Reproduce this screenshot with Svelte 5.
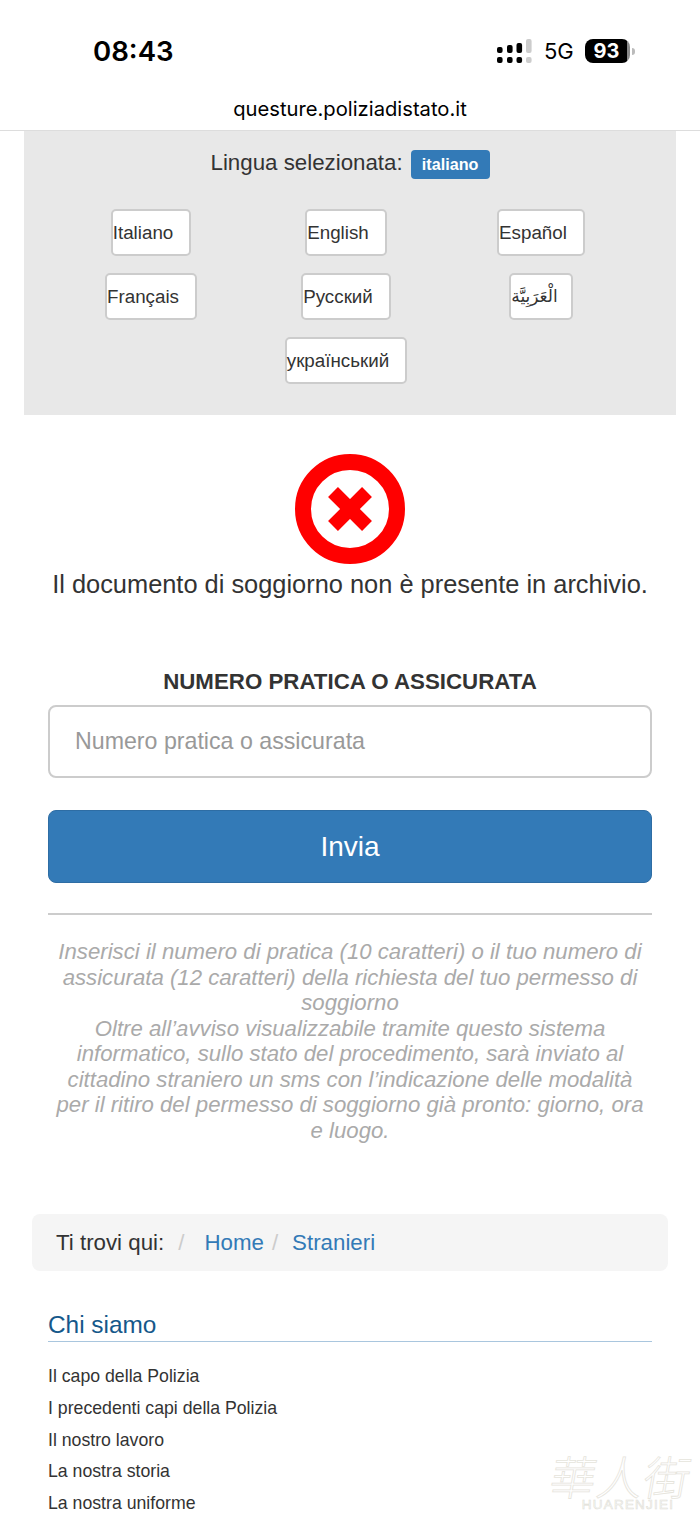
<script>
  const languages = [
    { label: 'Italiano' },
    { label: 'English' },
    { label: 'Español' },
    { label: 'Français' },
    { label: 'Русский' },
    { label: 'الْعَرَبِيَّة', rtl: true },
    { label: 'український', center: true }
  ]
  const links = [
    'Il capo della Polizia',
    'I precedenti capi della Polizia',
    'Il nostro lavoro',
    'La nostra storia',
    'La nostra uniforme'
  ]
  // top pill of each signal column, the last one is greyed out
  const bars = [
    { x: 0, y: 8, h: 6 },
    { x: 10, y: 6, h: 8 },
    { x: 19.5, y: 4, h: 10 },
    { x: 29, y: 0, h: 14 }
  ]
</script>

<div class="page">
  <header class="status">
    <span class="time">08:43</span>
    <div class="status-right">
      <svg class="signal" width="35" height="24" viewBox="0 0 35 24">
        {#each bars as bar, i}
          <rect x={bar.x} y={bar.y} width="5.6" height={bar.h} rx="2" fill={i === 3 ? '#ccc' : '#000'} />
          <rect x={bar.x} y="18" width="5.6" height="6" rx="2" fill={i === 3 ? '#ccc' : '#000'} />
        {/each}
      </svg>
      <span class="net">5G</span>
      <div class="battery"><span class="level">93</span></div>
      <span class="nub"></span>
    </div>
  </header>
  <div class="url">questure.poliziadistato.it</div>

  <section class="lang-panel">
    <div class="selected">Lingua selezionata: <span class="badge">italiano</span></div>
    <div class="lang-grid">
      {#each languages as lang}
        <div class="lang-cell" class:center={lang.center}>
          <button class="lang" class:rtl={lang.rtl}>{lang.label}</button>
        </div>
      {/each}
    </div>
  </section>

  <main class="form">
    <svg class="error" width="110" height="110" viewBox="0 0 110 110">
      <circle cx="55" cy="55" r="47" fill="#fff" stroke="#f00" stroke-width="16" />
      <path d="M38 38 L72 72 M72 38 L38 72" stroke="#f00" stroke-width="14" fill="none" />
    </svg>
    <p class="message">Il documento di soggiorno non è presente in archivio.</p>
    <label class="field-label" for="numero">NUMERO PRATICA O ASSICURATA</label>
    <input id="numero" class="field" placeholder="Numero pratica o assicurata" />
    <button class="submit">Invia</button>
    <hr />
    <p class="help">
      Inserisci il numero di pratica (10 caratteri) o il tuo numero di assicurata (12 caratteri) della richiesta del tuo permesso di soggiorno<br />
      Oltre all’avviso visualizzabile tramite questo sistema informatico, sullo stato del procedimento, sarà inviato al cittadino straniero un sms con l’indicazione delle modalità per il ritiro del permesso di soggiorno già pronto: giorno, ora e luogo.
    </p>
  </main>

  <nav class="crumbs">
    <span class="here">Ti trovi qui:</span>
    <span class="sep first">/</span>
    <a href="#home">Home</a>
    <span class="sep">/</span>
    <a href="#stranieri">Stranieri</a>
  </nav>

  <section class="footer-block">
    <h4>Chi siamo</h4>
    <ul>
      {#each links as link}
        <li>{link}</li>
      {/each}
    </ul>
  </section>

  <div class="watermark">
    <span class="mark-cn">華人街</span>
    <span class="mark-en">HUARENJIEI</span>
  </div>
</div>

<style>
  :global(body) {
    margin: 0;
    background: #fff;
    overflow: hidden;
  }

  .page {
    position: relative;
    width: 700px;
    height: 1520px;
    overflow: hidden;
    font-family: "Liberation Sans", Arial, sans-serif;
    color: #333;
  }

  .status {
    display: flex;
    justify-content: space-between;
    align-items: center;
    height: 24px;
    padding: 39px 65px 0 93px;
    color: #000;
  }

  .time {
    font-family: Inter, sans-serif;
    font-size: 27.6px;
    font-weight: 600;
    line-height: 26px;
    width: 80px;
    white-space: nowrap;
  }

  .status-right {
    display: flex;
    align-items: center;
  }

  .signal {
    display: block;
  }

  .net {
    font-family: Inter, sans-serif;
    font-size: 22px;
    font-weight: 400;
    margin-left: 12px;
    width: 31px;
  }

  .battery {
    margin-left: 10px;
    width: 45px;
    height: 24px;
    border-radius: 8px;
    background: linear-gradient(to right, #000 42px, #8a8a8a 42px);
    display: flex;
    justify-content: center;
    align-items: center;
  }

  .level {
    color: #fff;
    font-family: Inter, sans-serif;
    font-size: 20px;
    font-weight: 700;
    margin-right: 2px;
  }

  .nub {
    width: 3px;
    height: 7px;
    margin-left: 2px;
    border-radius: 0 3px 3px 0;
    background: #bbb;
  }

  .url {
    margin-top: 33px;
    height: 34px;
    line-height: 26px;
    text-align: center;
    font-family: Inter, sans-serif;
    font-size: 20.2px;
    color: #000;
    border-bottom: 1px solid #ddd;
  }

  .lang-panel {
    margin: 0 24px;
    height: 284px;
    background: #e8e8e8;
  }

  .selected {
    padding-top: 19px;
    height: 29px;
    line-height: 26px;
    text-align: center;
    font-size: 22.3px;
  }

  .badge {
    display: inline-block;
    margin-left: 2px;
    padding: 0 11px;
    height: 29px;
    line-height: 29px;
    background: #337ab7;
    color: #fff;
    font-size: 16.2px;
    font-weight: 700;
    border-radius: 4px;
  }

  .lang-grid {
    display: grid;
    grid-template-columns: repeat(3, 195px);
    row-gap: 17px;
    margin: 30px 0 0 29.5px;
  }

  .lang-cell {
    display: flex;
    justify-content: center;
  }

  .lang-cell.center {
    grid-column: 2;
  }

  .lang {
    height: 47px;
    padding: 0 16px 0 0;
    background: #fff;
    border: 2px solid #ccc;
    border-radius: 5px;
    color: #333;
    font-family: "Liberation Sans", "DejaVu Sans", sans-serif;
    font-size: 18.8px;
    text-align: left;
  }

  .lang.rtl {
    padding-right: 13px;
    font-size: 17px;
  }

  .form {
    display: flex;
    flex-direction: column;
    padding: 39px 48px 0;
  }

  .error {
    align-self: center;
    display: block;
  }

  .message {
    margin: 6px -20px 0;
    text-align: center;
    font-size: 25.4px;
    line-height: 28px;
  }

  .field-label {
    margin-top: 71px;
    text-align: center;
    font-size: 22.3px;
    font-weight: 700;
    line-height: 26px;
  }

  .field {
    margin-top: 10px;
    box-sizing: border-box;
    height: 73px;
    padding: 0 25px;
    border: 2px solid #ccc;
    border-radius: 8px;
    font-family: inherit;
    font-size: 23.2px;
  }

  .field::placeholder {
    color: #999;
  }

  .submit {
    margin-top: 32px;
    height: 73px;
    background: #337ab7;
    border: 1px solid #2e6da4;
    border-radius: 8px;
    color: #fff;
    font-family: inherit;
    font-size: 28px;
  }

  hr {
    width: 100%;
    margin: 30px 0 0;
    border: 0;
    border-top: 2px solid #ccc;
  }

  .help {
    margin: 24px 0 0;
    padding: 0 5px;
    text-align: center;
    font-size: 22.2px;
    font-style: italic;
    line-height: 25.55px;
    color: #aaa;
  }

  .crumbs {
    display: flex;
    align-items: center;
    margin: 71px 32px 0;
    height: 57px;
    padding-left: 24px;
    background: #f5f5f5;
    border-radius: 8px;
    font-size: 22.3px;
  }

  .crumbs a {
    color: #337ab7;
    text-decoration: none;
  }

  .sep {
    color: #ccc;
    margin: 0 14px 0 8px;
  }

  .sep.first {
    margin: 0 20px 0 14px;
  }

  .footer-block {
    padding: 40px 48px 0;
  }

  h4 {
    margin: 0;
    height: 30px;
    line-height: 28px;
    font-size: 24.4px;
    font-weight: 400;
    color: #15588a;
    border-bottom: 1px solid #a9c6de;
  }

  ul {
    margin: 19px 0 0;
    padding: 0;
    list-style: none;
  }

  li {
    height: 31.7px;
    line-height: 31.7px;
    font-size: 17.7px;
  }

  .watermark {
    position: absolute;
    left: 550px;
    top: 1450px;
    width: 142px;
    display: flex;
    flex-direction: column;
    align-items: center;
  }

  .mark-cn {
    font-family: "Noto Sans CJK TC", sans-serif;
    font-size: 46px;
    font-weight: 300;
    line-height: 50px;
    letter-spacing: 1px;
    color: #fff;
    -webkit-text-stroke: 0.8px #e6e4dc;
    transform: skewX(-10deg);
    white-space: nowrap;
  }

  .mark-en {
    margin: -2px 0 0 14px;
    font-size: 13.5px;
    line-height: 14px;
    letter-spacing: 1.2px;
    color: #fff;
    -webkit-text-stroke: 0.6px #e0ded6;
    white-space: nowrap;
  }
</style>
